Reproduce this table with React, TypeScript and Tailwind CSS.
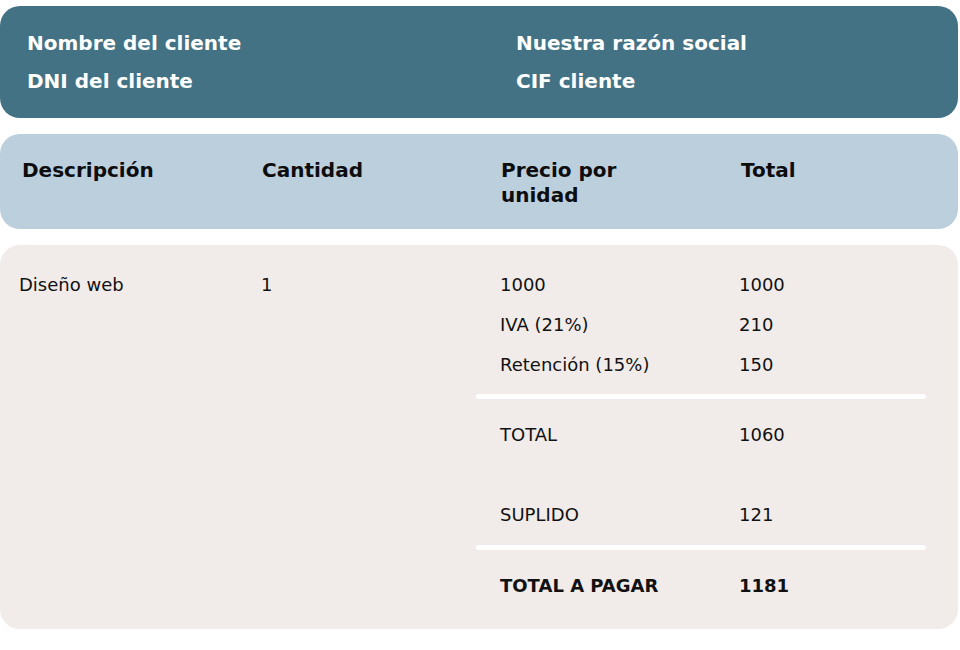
export default function App() {
  type Line = {
    label: string;
    value: string;
    bold?: boolean;
  };

  const subtotal: Line[] = [
    { label: "1000", value: "1000" },
    { label: "IVA (21%)", value: "210" },
    { label: "Retención (15%)", value: "150" },
  ];

  return (
    <div className="w-[960px] h-[650px] bg-white pt-[6px] font-['DejaVu_Sans',sans-serif]">
      {/* Client / company header */}
      <div className="w-[958px] h-[112px] rounded-[20px] bg-[#437285] pt-[18px] pl-[27px] grid grid-cols-[489px_1fr] text-[20px] font-bold leading-[38px] text-white">
        <div>
          <div>Nombre del cliente</div>
          <div>DNI del cliente</div>
        </div>
        <div>
          <div>Nuestra razón social</div>
          <div>CIF cliente</div>
        </div>
      </div>

      {/* Column titles */}
      <div className="mt-[16px] w-[958px] h-[95px] rounded-[20px] bg-[#bccfdc] pt-[24px] pl-[22px] grid grid-cols-[240px_239px_240px_1fr] text-[20px] font-bold leading-[25px] text-[#0d0d0d]">
        <div>Descripción</div>
        <div>Cantidad</div>
        <div>
          Precio por
          <br />
          unidad
        </div>
        <div>Total</div>
      </div>

      {/* Lines and totals */}
      <div className="mt-[16px] w-[958px] h-[384px] rounded-[20px] bg-[#f1ecea] pt-[20px] pl-[19px] flex text-[18px] leading-[40px] text-[#111111]">
        <div className="w-[242px]">Diseño web</div>
        <div className="w-[215px]">1</div>

        <div className="w-[450px] flex flex-col">
          {subtotal.map((row) => (
            <div key={row.label} className="grid grid-cols-[239px_1fr] pl-[24px]">
              <div>{row.label}</div>
              <div>{row.value}</div>
            </div>
          ))}

          <div className="mt-[9px] h-[5px] rounded-full bg-white" />

          <div className="mt-[16px] grid grid-cols-[239px_1fr] pl-[24px]">
            <div>TOTAL</div>
            <div>1060</div>
          </div>
          <div className="mt-[40px] grid grid-cols-[239px_1fr] pl-[24px]">
            <div>SUPLIDO</div>
            <div>121</div>
          </div>

          <div className="mt-[10px] h-[5px] rounded-full bg-white" />

          <div className="mt-[16px] grid grid-cols-[239px_1fr] pl-[24px] font-bold">
            <div>TOTAL A PAGAR</div>
            <div>1181</div>
          </div>
        </div>
      </div>
    </div>
  );
}
